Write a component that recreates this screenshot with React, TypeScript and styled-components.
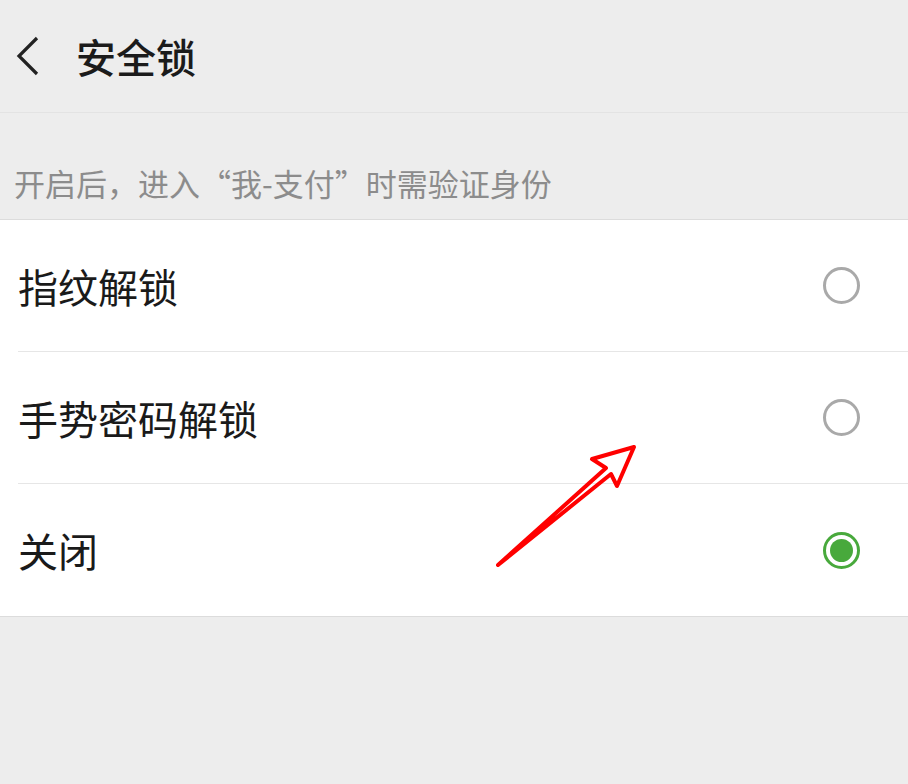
import React from "react";
import styled, { createGlobalStyle } from "styled-components";

const Global = createGlobalStyle`
  html, body { margin: 0; padding: 0; background: #ededed; }
  body { font-family: "Noto Sans CJK SC", "Noto Sans", sans-serif; }
`;

const Page = styled.div`
  position: relative;
  width: 908px;
  height: 784px;
  background: #ededed;
  overflow: hidden;
`;

const Header = styled.div`
  height: 113px;
  display: flex;
  align-items: center;
  padding-left: 15px;
  border-bottom: 1px solid #e3e3e3;
  box-sizing: border-box;
`;

const Back = styled.svg`
  width: 26px;
  height: 40px;
  flex: none;
`;

const Title = styled.h1`
  margin: 0 0 0 35px;
  font-size: 40px;
  font-weight: 500;
  color: #1b1b1b;
  line-height: 1;
`;

const Hint = styled.div`
  height: 106px;
  display: flex;
  align-items: flex-end;
  padding: 0 0 21px 14px;
  box-sizing: border-box;
  font-size: 31px;
  color: #8c8c8c;
  line-height: 1;
`;

const List = styled.div`
  background: #fff;
  border-top: 1px solid #dcdcdc;
  border-bottom: 1px solid #dcdcdc;
`;

const Row = styled.div<{ $last?: boolean }>`
  height: 132px;
  margin-left: 18px;
  padding-right: 48px;
  display: flex;
  align-items: center;
  justify-content: space-between;
  border-bottom: ${(p) => (p.$last ? "none" : "1px solid #e6e6e6")};
  box-sizing: border-box;
`;

const Label = styled.span`
  font-size: 40px;
  color: #1a1a1a;
  line-height: 1;
`;

const Radio = styled.span<{ $checked?: boolean }>`
  width: 37px;
  height: 37px;
  box-sizing: border-box;
  border-radius: 50%;
  border: 3px solid ${(p) => (p.$checked ? "#48a93c" : "#a9a9a9")};
  display: flex;
  align-items: center;
  justify-content: center;
  &::after {
    content: "";
    display: ${(p) => (p.$checked ? "block" : "none")};
    width: 23px;
    height: 23px;
    border-radius: 50%;
    background: #48a93c;
  }
`;

const Arrow = styled.svg`
  position: absolute;
  left: 0;
  top: 0;
  width: 908px;
  height: 784px;
  pointer-events: none;
`;

export default function App() {
  const items = [
    { label: "指纹解锁", checked: false },
    { label: "手势密码解锁", checked: false },
    { label: "关闭", checked: true },
  ];
  return (
    <Page>
      <Global />
      <Header>
        <Back viewBox="0 0 26 40">
          <polyline points="22,2 4,20 22,38" fill="none" stroke="#222" strokeWidth="3.2" />
        </Back>
        <Title>安全锁</Title>
      </Header>
      <Hint>开启后，进入“我-支付”时需验证身份</Hint>
      <List>
        {items.map((it, i) => (
          <Row key={it.label} $last={i === items.length - 1}>
            <Label>{it.label}</Label>
            <Radio $checked={it.checked} />
          </Row>
        ))}
      </List>
      <Arrow viewBox="0 0 908 784">
        <polygon
          points="498,565 606,468 592,459 634,447 617,486 611,474"
          fill="none"
          stroke="#ff0000"
          strokeWidth="4"
          strokeLinejoin="round"
        />
      </Arrow>
    </Page>
  );
}
